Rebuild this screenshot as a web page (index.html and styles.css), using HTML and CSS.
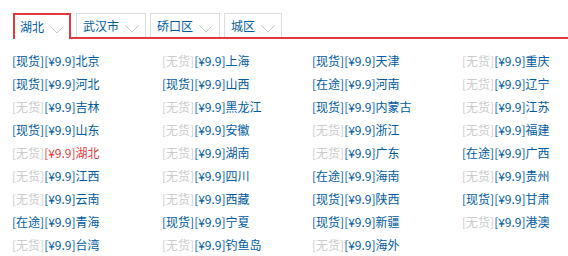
FILE: index.html
```html
<!DOCTYPE html>
<html lang="zh-CN">
<head>
  <meta charset="UTF-8">
  <title>选择地址</title>
  <link rel="stylesheet" href="styles.css">
</head>
<body>

<div class="area-picker">
  <div class="tabs">
    <a class="tab current">湖北<svg class="arrow" width="14" height="8" viewBox="0 0 14 8"><polyline points="0.5,0.5 7,7 13.5,0.5"/></svg></a>
    <a class="tab">武汉市<svg class="arrow" width="14" height="8" viewBox="0 0 14 8"><polyline points="0.5,0.5 7,7 13.5,0.5"/></svg></a>
    <a class="tab">硚口区<svg class="arrow" width="14" height="8" viewBox="0 0 14 8"><polyline points="0.5,0.5 7,7 13.5,0.5"/></svg></a>
    <a class="tab">城区<svg class="arrow" width="14" height="8" viewBox="0 0 14 8"><polyline points="0.5,0.5 7,7 13.5,0.5"/></svg></a>
  </div>

  <ul class="list">
    <li><span class="stock">[现货]</span>[¥9.9]北京</li>
    <li><span class="stock none">[无货]</span>[¥9.9]上海</li>
    <li><span class="stock">[现货]</span>[¥9.9]天津</li>
    <li><span class="stock none">[无货]</span>[¥9.9]重庆</li>

    <li><span class="stock">[现货]</span>[¥9.9]河北</li>
    <li><span class="stock">[现货]</span>[¥9.9]山西</li>
    <li><span class="stock">[在途]</span>[¥9.9]河南</li>
    <li><span class="stock none">[无货]</span>[¥9.9]辽宁</li>

    <li><span class="stock none">[无货]</span>[¥9.9]吉林</li>
    <li><span class="stock none">[无货]</span>[¥9.9]黑龙江</li>
    <li><span class="stock">[现货]</span>[¥9.9]内蒙古</li>
    <li><span class="stock none">[无货]</span>[¥9.9]江苏</li>

    <li><span class="stock">[现货]</span>[¥9.9]山东</li>
    <li><span class="stock none">[无货]</span>[¥9.9]安徽</li>
    <li><span class="stock none">[无货]</span>[¥9.9]浙江</li>
    <li><span class="stock none">[无货]</span>[¥9.9]福建</li>

    <li class="selected"><span class="stock none">[无货]</span>[¥9.9]湖北</li>
    <li><span class="stock none">[无货]</span>[¥9.9]湖南</li>
    <li><span class="stock none">[无货]</span>[¥9.9]广东</li>
    <li><span class="stock">[在途]</span>[¥9.9]广西</li>

    <li><span class="stock none">[无货]</span>[¥9.9]江西</li>
    <li><span class="stock none">[无货]</span>[¥9.9]四川</li>
    <li><span class="stock">[在途]</span>[¥9.9]海南</li>
    <li><span class="stock none">[无货]</span>[¥9.9]贵州</li>

    <li><span class="stock none">[无货]</span>[¥9.9]云南</li>
    <li><span class="stock none">[无货]</span>[¥9.9]西藏</li>
    <li><span class="stock">[现货]</span>[¥9.9]陕西</li>
    <li><span class="stock">[现货]</span>[¥9.9]甘肃</li>

    <li><span class="stock">[在途]</span>[¥9.9]青海</li>
    <li><span class="stock">[现货]</span>[¥9.9]宁夏</li>
    <li><span class="stock">[现货]</span>[¥9.9]新疆</li>
    <li><span class="stock none">[无货]</span>[¥9.9]港澳</li>

    <li><span class="stock none">[无货]</span>[¥9.9]台湾</li>
    <li><span class="stock none">[无货]</span>[¥9.9]钓鱼岛</li>
    <li><span class="stock none">[无货]</span>[¥9.9]海外</li>
  </ul>
</div>

</body>
</html>
```

FILE: styles.css
```css
* {
  box-sizing: border-box;
}

body {
  margin: 0;
  background: #fff;
  font-family: "Noto Sans CJK SC", "Microsoft YaHei", sans-serif;
  font-size: 12px;
  color: #005aa0;
  overflow: hidden;
}

.area-picker {
  padding-top: 13px;
}

.tabs {
  display: flex;
  gap: 4px;
  margin-left: 13px;
  border-bottom: 2px solid #e4393c;
  height: 26px;
}

.tab {
  display: flex;
  align-items: center;
  gap: 6px;
  height: 24px;
  padding: 0 6px;
  border: 1px solid #ddd;
  border-bottom: none;
  background: #fff;
  color: #005aa0;
  cursor: pointer;
}

.tab.current {
  height: 26px;
  padding: 0 5px 1px;
  border: 2px solid #e4393c;
  border-bottom: none;
  margin-right: 1px;
}

.arrow {
  margin-top: 6px;
  fill: none;
  stroke: #c8c8c8;
  stroke-width: 1;
}

.list {
  display: grid;
  grid-template-columns: repeat(3, 150px) 1fr;
  margin: 0;
  padding: 10px 0 0 12px;
  list-style: none;
}

.list li {
  height: 23px;
  line-height: 23px;
  white-space: nowrap;
  overflow: hidden;
  cursor: pointer;
}

.stock.none {
  color: #ccc;
}

.list li.selected {
  color: #e4393c;
}
```
